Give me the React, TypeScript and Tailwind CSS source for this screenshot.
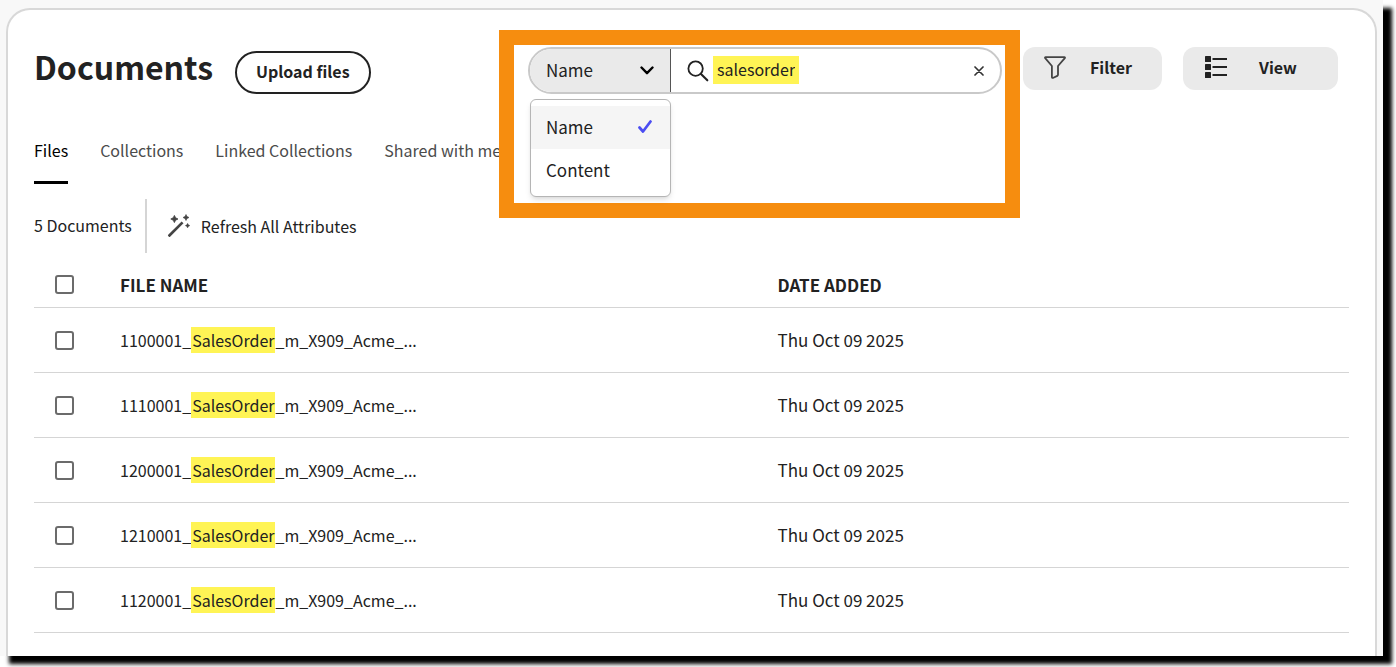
import { useState } from "react";

const SEARCH_FIELDS = ["Name", "Content"];

const DOCUMENTS = ["1100001", "1110001", "1200001", "1210001", "1120001"].map((id) => ({
  id,
  match: "SalesOrder",
  rest: "_m_X909_Acme_...",
  added: "Thu Oct 09 2025",
}));

const TABS = ["Files", "Collections", "Linked Collections", "Shared with me"];

function WandIcon() {
  return (
    <svg width="24" height="24" viewBox="0 0 24 24" fill="#444" aria-hidden="true">
      <path d="M1.2 20.8 14.6 7.4l1.9 1.9L3.1 22.7a.8.8 0 0 1-1.2 0l-.7-.7a.8.8 0 0 1 0-1.2z" />
      <path d="M7.4 1.4l1.2 2.4 2.4 1.2-2.4 1.2-1.2 2.4-1.2-2.4-2.4-1.2 2.4-1.2z" stroke="#444" strokeWidth=".8" strokeLinejoin="round" />
      <path d="M19 .5l1 2 2 1-2 1-1 2-1-2-2-1 2-1z" stroke="#444" strokeWidth=".6" strokeLinejoin="round" />
      <path d="M20.6 9.300l.8 1.500 1.500.8-1.500.8-.8 1.500-.8-1.500-1.500-.8 1.500-.8z" stroke="#444" strokeWidth=".4" strokeLinejoin="round" />
    </svg>
  );
}

function FunnelIcon() {
  return (
    <svg width="22" height="23" viewBox="0 0 22 23" fill="none" stroke="#444" strokeWidth="1.8" strokeLinejoin="round" aria-hidden="true">
      <path d="M1.6 1.2h18.8c.6 0 .8.6.4 1L14 10v8.6c0 .6-.2 1-.7 1.3l-3.9 1.900c-.8.4-1.500 0-1.500-.8V10L1.200 2.200c-.4-.4-.2-1 .4-1z" />
    </svg>
  );
}

function ListIcon() {
  return (
    <svg width="22" height="22" viewBox="0 0 22 22" fill="#222" aria-hidden="true">
      <rect x="0" y="0" width="6" height="6" rx=".6" />
      <rect x="0" y="8" width="6" height="6" rx=".6" />
      <rect x="0" y="16" width="6" height="6" rx=".6" />
      <rect x="7.5" y="2" width="14.5" height="2" />
      <rect x="7.5" y="10" width="14.5" height="2" />
      <rect x="7.5" y="18" width="14.5" height="2" />
    </svg>
  );
}

function SearchIcon() {
  return (
    <svg width="22" height="22" viewBox="0 0 22 22" fill="none" stroke="#222" strokeLinecap="round" aria-hidden="true">
      <circle cx="8.6" cy="8.6" r="7.2" strokeWidth="1.8" />
      <path d="M14 14l6.3 6.3" strokeWidth="2.1" />
    </svg>
  );
}

function CheckBox({ label }: { label: string }) {
  return (
    <input
      type="checkbox"
      aria-label={label}
      className="block size-[19px] appearance-none rounded-[3px] border-2 border-[#6b6b6b] bg-white checked:bg-[#6b6b6b]"
    />
  );
}

function SearchBar() {
  const [field, setField] = useState("Name");
  const [query, setQuery] = useState("salesorder");
  const [open, setOpen] = useState(true);

  return (
    <div className="relative z-10 ml-auto w-[474px]">
      <div className="absolute -top-[17px] -right-[18px] -left-[29px] h-[188px] border-[15px] border-[#f68d0f] bg-white" />
      <div className="relative flex h-[47px] overflow-hidden rounded-full border-2 border-[#c9c9c9] bg-white">
        <div className="relative flex w-[141px] shrink-0 border-r border-[#555] bg-[#eaeaea]">
          <select
            aria-label="Search by"
            value={field}
            onChange={(e) => setField(e.target.value)}
            onMouseDown={(e) => {
              e.preventDefault();
              setOpen(!open);
            }}
            className="w-full appearance-none bg-transparent pb-[2px] pl-4 text-[17px]"
          >
            {SEARCH_FIELDS.map((name) => (
              <option key={name}>{name}</option>
            ))}
          </select>
          <svg className="pointer-events-none absolute top-[17px] right-4" width="14" height="9" viewBox="0 0 14 9" fill="none" stroke="#000" strokeWidth="2.4" strokeLinecap="round" strokeLinejoin="round" aria-hidden="true">
            <path d="M1.5 1.5 7 7.2l5.5-5.7" />
          </svg>
        </div>
        <div className="flex min-w-0 flex-1 items-center pr-4 pl-4">
          <SearchIcon />
          <input
            type="text"
            aria-label="Search documents"
            value={query}
            onChange={(e) => setQuery(e.target.value)}
            className="mb-[2px] ml-1 h-7 [field-sizing:content] bg-[#fff455] px-1 pb-[2px] outline-none"
          />
          <button type="button" aria-label="Clear search" onClick={() => setQuery("")} className="ml-auto">
            <svg width="10" height="10" viewBox="0 0 10 10" fill="none" stroke="#333" strokeWidth="1.7" strokeLinecap="round" aria-hidden="true">
              <path d="M1 1l8 8M9 1L1 9" />
            </svg>
          </button>
        </div>
      </div>
      {open && (
        <ul role="listbox" aria-label="Search by" className="absolute top-[52px] left-[2px] w-[141px] rounded-md border border-[#b5b5b5] bg-white pt-[6px] pb-1 text-[17px] shadow-md">
          {SEARCH_FIELDS.map((name) => (
            <li
              key={name}
              role="option"
              aria-selected={name === field}
              onClick={() => setField(name)}
              className="flex h-[43px] items-center justify-between pr-[18px] pb-[2px] pl-[15px] aria-selected:bg-[#f5f5f5]"
            >
              {name}
              {name === field && (
                <svg width="14" height="13" viewBox="0 0 14 13" fill="none" stroke="#4b4df2" strokeWidth="2.7" strokeLinecap="round" strokeLinejoin="round" aria-hidden="true">
                  <path d="M1.5 7.5l3.5 4L12.5 1.5" />
                </svg>
              )}
            </li>
          ))}
        </ul>
      )}
    </div>
  );
}

export default function App() {
  return (
    <div className="flex min-h-screen overflow-hidden bg-white pr-[13px] pb-[11px] font-['Noto_Sans_CJK_SC','Open_Sans',sans-serif] text-[16px] leading-6 text-[#222]">
      <div className="flex min-w-0 flex-1 bg-[#f8f8f8] pt-2 pr-[6px] pl-[6px] shadow-[9px_8px_4px_#000]">
        <main className="min-w-0 flex-1 rounded-t-[24px] border-2 border-b-0 border-[#d8d8d8] bg-white pr-[26px] pl-[26px]">
          <header className="flex items-start pt-[37px] pr-[11px]">
            <h1 className="text-[32px] leading-[38px] font-bold">Documents</h1>
            <button type="button" className="mt-1 ml-[22px] h-[43px] shrink-0 rounded-full border-2 border-[#222] px-[19px] pb-1 font-bold">
              Upload files
            </button>
            <SearchBar />
            <button type="button" className="ml-[21px] flex h-[43px] w-[139px] items-center gap-6 rounded-xl bg-[#eaeaea] pb-[3px] pl-[21px] font-bold">
              <FunnelIcon />
              Filter
            </button>
            <button type="button" className="ml-[21px] flex h-[43px] w-[155px] items-center gap-8 rounded-xl bg-[#eaeaea] pb-[3px] pl-[22px] font-bold">
              <ListIcon />
              View
            </button>
          </header>

          <nav aria-label="Document views" className="mt-[44px] flex gap-8 text-[#4b4b4b]">
            {TABS.map((tab, i) => (
              <a
                key={tab}
                href="#"
                aria-current={i === 0 ? "page" : undefined}
                className="h-[46px] border-b-[3px] border-transparent whitespace-nowrap aria-[current=page]:border-black aria-[current=page]:text-black"
              >
                {tab}
              </a>
            ))}
          </nav>

          <div className="mt-[15px] flex h-[54px] items-center">
            <span className="flex h-full items-center border-r-2 border-[#d5d5d5] pr-[13px] pb-[2px]">5 Documents</span>
            <button type="button" className="flex items-center gap-[10px] pl-5">
              <WandIcon />
              Refresh All Attributes
            </button>
          </div>

          <table className="w-full table-fixed border-collapse text-left">
            <thead>
              <tr className="h-[54px] border-b border-[#d5d5d5] text-[17px]">
                <th scope="col" className="w-[86px] pt-[10px] pl-[21px]">
                  <CheckBox label="Select all documents" />
                </th>
                <th scope="col" className="w-1/2 pt-[10px]">FILE NAME</th>
                <th scope="col" className="pt-[10px]">DATE ADDED</th>
              </tr>
            </thead>
            <tbody>
              {DOCUMENTS.map((doc) => (
                <tr key={doc.id} className="h-[65px] border-b border-[#d5d5d5]">
                  <td className="pt-[2px] pl-[21px]">
                    <CheckBox label={`Select ${doc.id}`} />
                  </td>
                  <td>
                    {doc.id}_<mark className="inline-block bg-[#fff455] px-px text-inherit leading-[26px]">{doc.match}</mark>
                    {doc.rest}
                  </td>
                  <td className="text-[17px]">{doc.added}</td>
                </tr>
              ))}
            </tbody>
          </table>
        </main>
      </div>
    </div>
  );
}
